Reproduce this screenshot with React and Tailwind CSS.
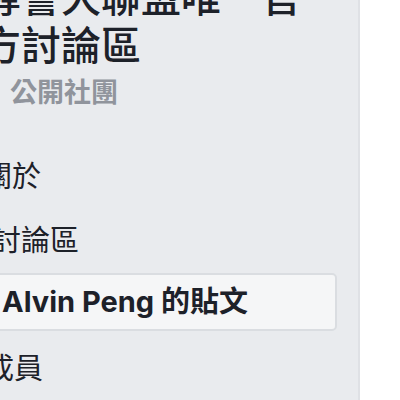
import React from "react";

const cjk = { fontFamily: '"Noto Sans CJK TC", "Noto Sans", sans-serif' };
const mixed = { fontFamily: 'Inter, "Noto Sans CJK TC", sans-serif' };

const NavItem = ({ label, pad }) => (
  <div className={`h-[58px] flex items-center ${pad} text-[29px] leading-[58px] text-[#1d2129]`} style={cjk}>
    {label}
  </div>
);

export default function App() {
  return (
    <div className="w-[400px] h-[400px] overflow-hidden bg-white flex">
      <div className="w-[360px] h-full shrink-0 bg-[#e9ebee] border-r-2 border-[#dfe1e5] pr-[21px]">
        <div className="ml-[-19px] mt-[-29px] flex flex-col">
          <h1 className="text-[40px] leading-[48px] font-medium text-[#1d2129] whitespace-nowrap" style={cjk}>
            尋警犬聯盟唯一官
            <br />
            方討論區
          </h1>
          <div className="mt-[8px] pl-[29px] text-[27px] leading-[32px] font-bold text-[#90949c]" style={cjk}>
            公開社團
          </div>

          <div className="mt-[38px] flex flex-col gap-[6px]">
            <NavItem label="關於" pad="pl-[2px]" />
            <NavItem label="討論區" pad="pl-[11px]" />
            <div
              className="h-[58px] flex items-center pl-[19px] rounded-[5px] border-2 border-[#dadde1] bg-[#f5f6f7] text-[29px] leading-[54px] font-bold text-[#1d2129]"
              style={mixed}
            >
              Alvin Peng 的貼文
            </div>
            <NavItem label="成員" pad="pl-[4px]" />
          </div>
        </div>
      </div>
    </div>
  );
}
